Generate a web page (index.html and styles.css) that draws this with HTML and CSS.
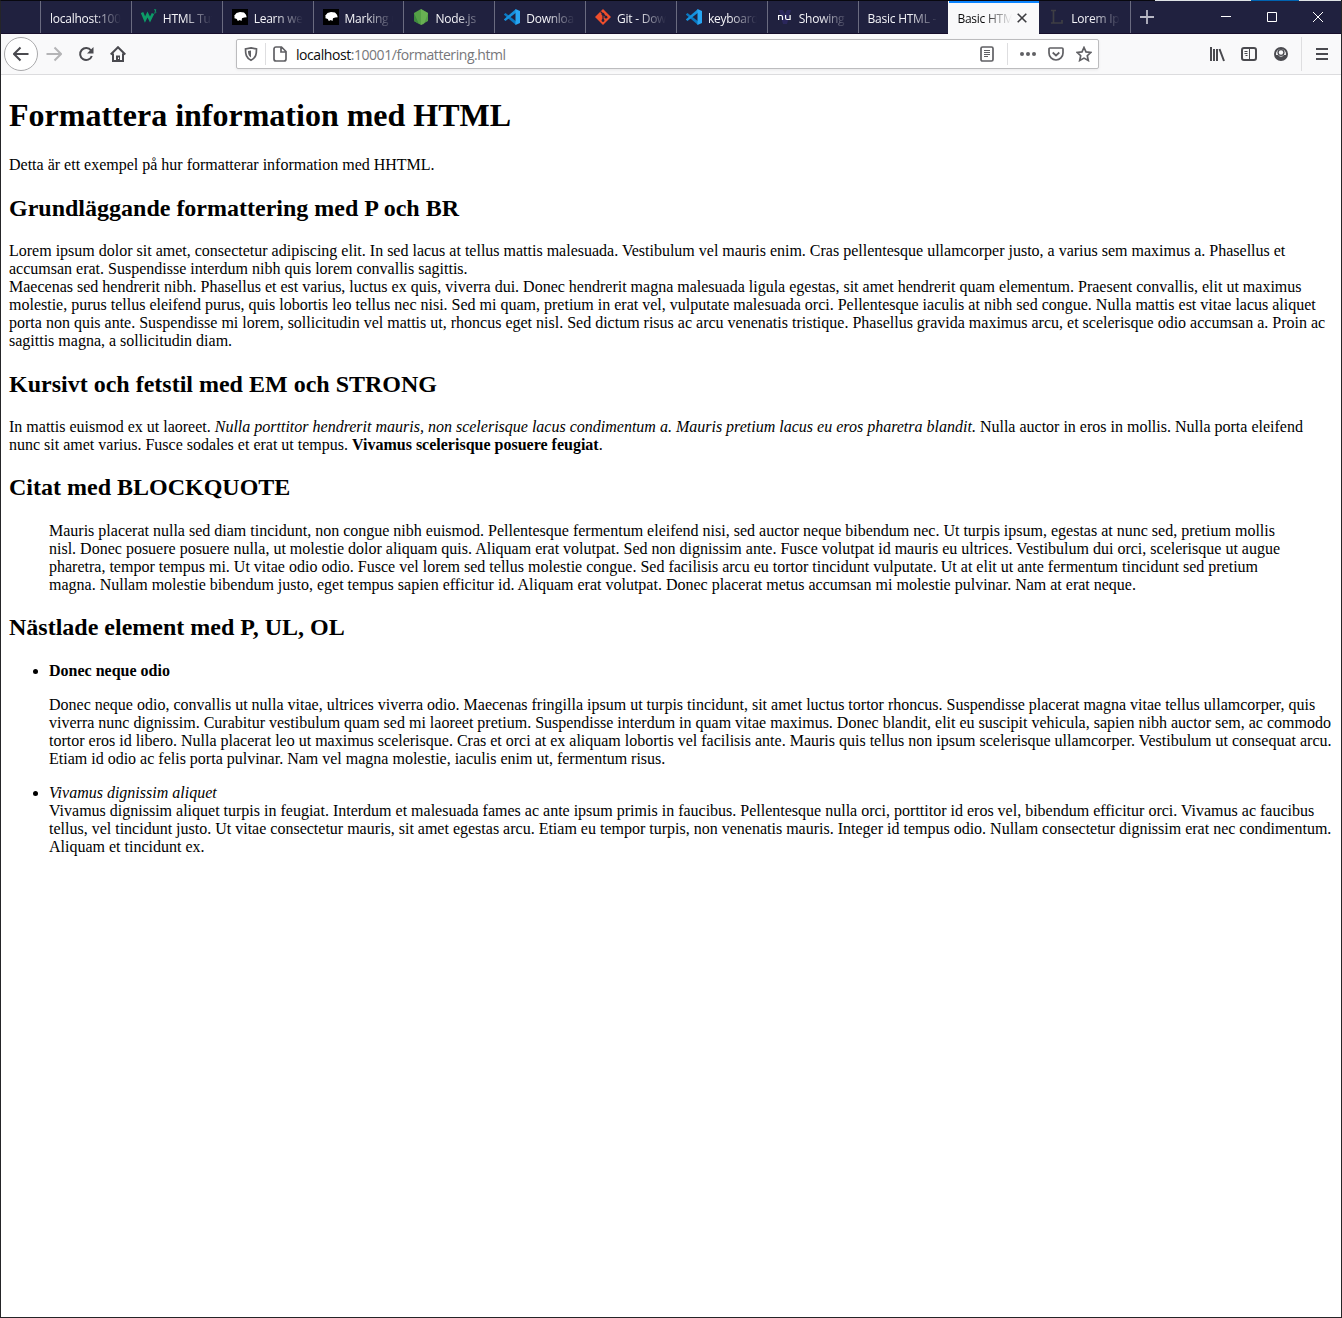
FILE: index.html
```html
<!DOCTYPE html>
<html lang="sv">
<head>
<meta charset="utf-8">
<title>Basic HTML</title>
<link rel="stylesheet" href="styles.css">
</head>
<body>
<svg width="0" height="0" class="defs">
  <symbol id="mdn" viewBox="0 0 16 16"><path fill="#000" d="M0 0h16v16H0z"/><path fill="#fff" d="M2 7l2.500-3 3.500-1 4 .6 2 2.200.7 2.400-2.500.3-2.200.7-.5 2.800-1.700-1-2 1-1-2L2 9l1-1z"/></symbol>
  <symbol id="vscode" viewBox="0 0 16 16"><path fill="#0a78c2" d="M0 5.200L1.500 4 12 12.200V16L0 5.800z"/><path fill="#1690dc" d="M0 10.800L1.500 12 12 3.800V0L0 10.200z"/><path fill="#27a5f2" d="M11.500 0L16 2v12l-4.500 2z"/></symbol>
</svg>
<div class="window">
  <header class="tabbar">
    <div class="lead"></div>
    <div class="tab"><span class="label">localhost:10001</span></div>
    <div class="tab"><svg viewBox="0 0 16 16"><path fill="none" stroke="#0d9b67" stroke-width="2.700" d="M1 3.500L4 10.500 6.500 5.500 9 10.500 12 4.500"/><path fill="none" stroke="#0d9b67" d="M13 .8h2l-1 1.500c1.500 0 1.500 2-1 1.700"/></svg><span class="label">HTML Tutorial</span></div>
    <div class="tab"><svg><use href="#mdn"/></svg><span class="label">Learn web</span></div>
    <div class="tab"><svg><use href="#mdn"/></svg><span class="label">Marking u</span></div>
    <div class="tab"><svg viewBox="0 0 16 16"><path fill="#55a047" d="M8 0l7 4v8l-7 4-7-4V4z"/><path fill="#79bd5c" d="M8 0l7 4-4 11-3 1z" opacity=".55"/><path fill="#3d8a3d" d="M1 4l5 11-5-3z"/></svg><span class="label">Node.js</span></div>
    <div class="tab"><svg><use href="#vscode"/></svg><span class="label">Download</span></div>
    <div class="tab"><svg viewBox="0 0 16 16"><path fill="#f04e2c" d="M8 0l8 8-8 8-8-8z"/><path fill="none" stroke="#21213d" stroke-width="1.200" d="M5.500 2.500L8 5v7M8 5l3 3"/><g fill="#21213d"><circle cx="8" cy="5.200" r="1.400"/><circle cx="8" cy="11.500" r="1.400"/><circle cx="11" cy="8.200" r="1.400"/></g></svg><span class="label">Git - Downl</span></div>
    <div class="tab"><svg><use href="#vscode"/></svg><span class="label">keyboard s</span></div>
    <div class="tab"><svg viewBox="0 0 16 16"><path fill="#302b69" d="M2 1h4l2 4 2-4h4l-4 14H6z" opacity=".7"/><path fill="none" stroke="#fff" stroke-width="1.200" d="M1.600 11V6.500H4q1.500 0 1.500 1.500v3M8.600 6v3q0 1.500 1.500 1.500h3V6"/></svg><span class="label">Showing r</span></div>
    <div class="tab"><span class="label">Basic HTML - M</span></div>
    <div class="tab active"><span class="label">Basic HTML</span><svg class="close" viewBox="0 0 10 10"><path d="M.7.7l8.600 8.600M9.300.7L.7 9.300"/></svg></div>
    <div class="tab"><svg viewBox="0 0 16 16"><path fill="none" stroke="#3e3e44" stroke-width="1.700" d="M2 1.500h5M4.500 2v12M2 14h11v-3"/></svg><span class="label">Lorem Ipsum</span></div>
    <svg class="plus" viewBox="0 0 14 14"><path d="M7 0v14M0 7h14"/></svg>
    <div class="controls">
      <svg viewBox="0 0 10 10"><path d="M0 4.500h10"/></svg>
      <svg viewBox="0 0 10 10"><path d="M.5.5h9v9h-9z"/></svg>
      <svg viewBox="0 0 10 10"><path d="M0 0l10 10M10 0L0 10"/></svg>
    </div>
    <div class="edge"></div>
  </header>
  <nav class="toolbar">
    <div class="nav-buttons">
      <div class="back"><svg viewBox="0 0 16 16"><path d="M15.500 8H1.500M7.500 1.500L1 8l6.500 6.500"/></svg></div>
      <svg class="off" viewBox="0 0 16 16"><path d="M.5 8h14M8.500 1.500L15 8l-6.500 6.500"/></svg>
      <svg viewBox="0 0 16 16"><path d="M13 4.500A6 6 0 1 0 13.800 10"/><path class="solid" d="M15.500 1v6.500H9z"/></svg>
      <svg viewBox="0 0 16 16"><path d="M.7 8.500L8 1.200l7.300 7.300M3 7.500V15h10V7.500"/><path class="solid" d="M6 15V9.500h4V15z"/><path class="knob" d="M8.500 11.500v1.500"/></svg>
    </div>
    <div class="urlbar">
      <svg viewBox="0 0 16 16"><path d="M8 1.800l5.500 1.200c0 5-.5 9-5.500 11.200C3 12 2.500 8 2.500 3z"/><path class="solid" d="M8 4.500v7C5.500 10 5 8 5 5z"/></svg>
      <i class="split"></i>
      <svg class="doc" viewBox="0 0 16 16"><path d="M4 1h5.500L14 5.500V13a2 2 0 0 1-2 2H4a2 2 0 0 1-2-2V3a2 2 0 0 1 2-2zM9 1v5h5"/></svg>
      <span class="address"><b>localhost</b>:10001/formattering.html</span>
      <svg class="reader" viewBox="0 0 16 16"><rect x="2" y="1" width="12" height="14" rx="1.500"/><path class="thin" d="M5 4.500h6M5 6.500h6M5 8.500h6M5 10.500h4"/></svg>
      <i class="split"></i>
      <svg class="dots" viewBox="0 0 16 16"><circle cx="2" cy="8" r="2"/><circle cx="8" cy="8" r="2"/><circle cx="14" cy="8" r="2"/></svg>
      <svg class="pocket" viewBox="0 0 16 16"><path d="M2 2h12a1 1 0 0 1 1 1v4a7 7 0 0 1-14 0V3a1 1 0 0 1 1-1zM4.700 6.500L8 9.500l3.300-3"/></svg>
      <svg class="star" viewBox="0 0 16 16"><path d="M8 1.500l2 4.400 4.900.5-3.600 3.300 1 4.800L8 12.100l-4.300 2.400 1-4.800L1.100 6.400 6 5.900z"/></svg>
    </div>
    <div class="tools">
      <svg viewBox="0 0 16 16"><path d="M2 1v14M5 3v12M8 3v12M10.500 3l4.500 12"/></svg>
      <svg viewBox="0 0 16 16"><rect x="1" y="2" width="14" height="12" rx="2"/><path class="thin" d="M8.500 2v12M3.500 5.500h3M3.500 7.500h3M4.500 9.500h2"/></svg>
      <svg viewBox="0 0 16 16"><path class="solid" fill-rule="evenodd" d="M8 1a7 7 0 1 0 0 14A7 7 0 0 0 8 1zM8 3a5 5 0 0 1 4.900 6h-2a3.300 3.300 0 0 1-5.800 0h-2A5 5 0 0 1 8 3z"/><circle class="solid" cx="8" cy="6.500" r="3.600"/><circle class="face" cx="8" cy="6.500" r="2.200"/></svg>
      <i class="split"></i>
      <svg class="menu" viewBox="0 0 16 16"><path d="M2 3h12M2 8h12M2 13h12"/></svg>
    </div>
  </nav>
  <main>
    <h1>Formattera information med HTML</h1>
    <p>Detta är ett exempel på hur formatterar information med HHTML.</p>
    <h2>Grundläggande formattering med P och BR</h2>
    <p>Lorem ipsum dolor sit amet, consectetur adipiscing elit. In sed lacus at tellus mattis malesuada. Vestibulum vel mauris enim. Cras pellentesque ullamcorper justo, a varius sem maximus a. Phasellus et<br>accumsan erat. Suspendisse interdum nibh quis lorem convallis sagittis.<br>Maecenas sed hendrerit nibh. Phasellus et est varius, luctus ex quis, viverra dui. Donec hendrerit magna malesuada ligula egestas, sit amet hendrerit quam elementum. Praesent convallis, elit ut maximus<br>molestie, purus tellus eleifend purus, quis lobortis leo tellus nec nisi. Sed mi quam, pretium in erat vel, vulputate malesuada orci. Pellentesque iaculis at nibh sed congue. Nulla mattis est vitae lacus aliquet<br>porta non quis ante. Suspendisse mi lorem, sollicitudin vel mattis ut, rhoncus eget nisl. Sed dictum risus ac arcu venenatis tristique. Phasellus gravida maximus arcu, et scelerisque odio accumsan a. Proin ac<br>sagittis magna, a sollicitudin diam.</p>
    <h2>Kursivt och fetstil med EM och STRONG</h2>
    <p>In mattis euismod ex ut laoreet. <em>Nulla porttitor hendrerit mauris, non scelerisque lacus condimentum a. Mauris pretium lacus eu eros pharetra blandit.</em> Nulla auctor in eros in mollis. Nulla porta eleifend<br>nunc sit amet varius. Fusce sodales et erat ut tempus. <strong>Vivamus scelerisque posuere feugiat</strong>.</p>
    <h2 class="tight">Citat med BLOCKQUOTE</h2>
    <blockquote>Mauris placerat nulla sed diam tincidunt, non congue nibh euismod. Pellentesque fermentum eleifend nisi, sed auctor neque bibendum nec. Ut turpis ipsum, egestas at nunc sed, pretium mollis<br>nisl. Donec posuere posuere nulla, ut molestie dolor aliquam quis. Aliquam erat volutpat. Sed non dignissim ante. Fusce volutpat id mauris eu ultrices. Vestibulum dui orci, scelerisque ut augue<br>pharetra, tempor tempus mi. Ut vitae odio odio. Fusce vel lorem sed tellus molestie congue. Sed facilisis arcu eu tortor tincidunt vulputate. Ut at elit ut ante fermentum tincidunt sed pretium<br>magna. Nullam molestie bibendum justo, eget tempus sapien efficitur id. Aliquam erat volutpat. Donec placerat metus accumsan mi molestie pulvinar. Nam at erat neque.</blockquote>
    <h2 class="tight">Nästlade element med P, UL, OL</h2>
    <ul>
      <li><strong>Donec neque odio</strong>
        <p>Donec neque odio, convallis ut nulla vitae, ultrices viverra odio. Maecenas fringilla ipsum ut turpis tincidunt, sit amet luctus tortor rhoncus. Suspendisse placerat magna vitae tellus ullamcorper, quis<br>viverra nunc dignissim. Curabitur vestibulum quam sed mi laoreet pretium. Suspendisse interdum in quam vitae maximus. Donec blandit, elit eu suscipit vehicula, sapien nibh auctor sem, ac commodo<br>tortor eros id libero. Nulla placerat leo ut maximus scelerisque. Cras et orci at ex aliquam lobortis vel facilisis ante. Mauris quis tellus non ipsum scelerisque ullamcorper. Vestibulum ut consequat arcu.<br>Etiam id odio ac felis porta pulvinar. Nam vel magna molestie, iaculis enim ut, fermentum risus.</p></li>
      <li><em>Vivamus dignissim aliquet</em><br>Vivamus dignissim aliquet turpis in feugiat. Interdum et malesuada fames ac ante ipsum primis in faucibus. Pellentesque nulla orci, porttitor id eros vel, bibendum efficitur orci. Vivamus ac faucibus<br>tellus, vel tincidunt justo. Ut vitae consectetur mauris, sit amet egestas arcu. Etiam eu tempor turpis, non venenatis mauris. Integer id tempus odio. Nullam consectetur dignissim erat nec condimentum.<br>Aliquam et tincidunt ex.</li>
    </ul>
  </main>
</div>
</body>
</html>
```
FILE: styles.css
```css
* { box-sizing: border-box; }
body { margin: 0; background: #fff; font-family: "Liberation Serif", "Times New Roman", serif; }
.defs { position: absolute; }
svg { display: block; flex: none; width: 16px; height: 16px; }
.window { height: 1318px; border: 1px solid #252528; border-top-color: #08080f; }

.tabbar { position: relative; display: flex; height: 33px; background: #20213f; border-bottom: 1px solid #170f2c; font: 12px/32px "Open Sans", "Noto Sans", sans-serif; color: #f4f4f8; }
.lead { width: 39px; flex: none; }
.tab { flex: none; width: 90.85px; display: flex; align-items: center; gap: 6px; padding: 0 10px 0 9px; border-left: 1px solid #6a6b80; white-space: nowrap; }
.label { flex: 1; min-width: 0; overflow: hidden; height: 33px; line-height: 35px; letter-spacing: -.25px; -webkit-mask-image: linear-gradient(to left, transparent, #000 28px); mask-image: linear-gradient(to left, transparent, #000 28px); }
.tab.active { height: 33px; background: #f9f9fa; color: #0c0c0d; border-left-color: #f9f9fa; box-shadow: inset 0 2px #0a84ff; gap: 5px; padding-left: 8px; padding-right: 12px; }
.active + .tab { border-left-color: transparent; }
.close { width: 10px; height: 10px; fill: none; stroke: #3c3c40; stroke-width: 1.6; }
.plus { width: 14px; height: 14px; margin: 9px 0 0 9px; stroke: #b9b9c5; stroke-width: 1.8; }
.active + .tab { width: 92px; border-right: 1px solid #6a6b80; }
.controls { display: flex; gap: 36px; margin: 11px 0 0 auto; padding-right: 18px; }
.controls svg { width: 10px; height: 10px; fill: none; stroke: #fff; stroke-width: 1; }
.edge { position: absolute; top: -1px; right: 0; width: 186px; height: 1px; background: linear-gradient(90deg, #dfe3e5 96px, #0063b1 96px 144px, #dfe3e5 144px); }

.toolbar { display: flex; align-items: center; height: 41px; background: #f9f9fa; border-bottom: 1px solid #dcdcde; }
.toolbar svg { fill: none; stroke: #4a4a4f; stroke-width: 2; }
.toolbar .solid { fill: #4a4a4f; stroke: none; }
.toolbar .thin { stroke-width: 1; }
.toolbar .knob { stroke: #fff; stroke-width: 1; }
.toolbar .face { fill: #f9f9fa; stroke: none; }
.nav-buttons { display: flex; align-items: center; gap: 16px; width: 235px; padding-left: 3px; }
.back { display: grid; place-items: center; width: 34px; height: 34px; border: 1px solid #a9a9ab; border-radius: 50%; background: #fff; margin-right: -8px; }
.toolbar svg.off { stroke: #b4b4b6; }
.urlbar { display: flex; align-items: center; width: 863px; height: 30px; padding: 0 6px; border: 1px solid #bcbcbe; border-radius: 2px; background: #fff; box-shadow: 0 1px 3px #0001; }
.urlbar svg { stroke: #606064; stroke-width: 1.7; }
.split { width: 1px; height: 22px; background: #dedee0; margin: 0 6px; }
.address { flex: 1; margin-left: 8px; padding-top: 2px; color: #77777b; font: 14px/28px "Open Sans", "Noto Sans", sans-serif; letter-spacing: -.44px; }
.address b { font-weight: 400; color: #0c0c0d; }
.urlbar .dots { fill: #606064; stroke: none; }
.reader + .split { margin: 0 12px; }
.pocket, .star { margin-left: 12px; }
.tools { display: flex; align-items: center; gap: 16px; margin-left: auto; padding-right: 11px; }
.tools .split { height: 34px; margin: 0 -4px; }
.urlbar .solid { fill: #606064; }

main { padding: 22px 0 0 8px; font-size: 16px; line-height: 18px; color: #000; white-space: nowrap; }
h1 { margin: 0 0 22px; font-size: 32px; line-height: 37px; }
h2 { margin: 20px 0; font-size: 24px; line-height: 28px; }
h2.tight { margin: 19px 0 21px; }
p { margin: 0; }
blockquote { margin: 0 40px; }
ul { margin: 0; padding-left: 40px; }
li p { margin: 16px 0; }
```
